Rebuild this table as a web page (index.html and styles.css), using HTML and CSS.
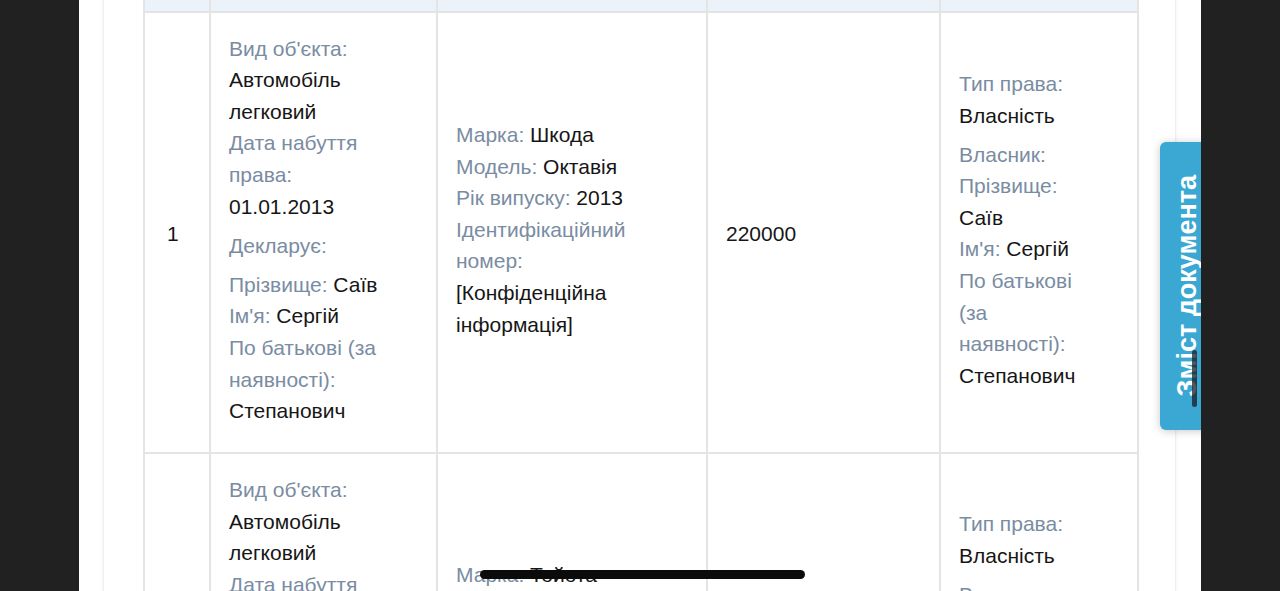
FILE: index.html
```html
<!DOCTYPE html>
<html lang="uk">
<head>
<meta charset="utf-8">
<title>Декларація — транспортні засоби</title>
<link rel="stylesheet" href="styles.css">
</head>
<body>
<div class="screen">
  <div class="card">
    <table class="decl">
      <colgroup>
        <col class="c-num"><col class="c-obj"><col class="c-char"><col class="c-cost"><col class="c-right">
      </colgroup>
      <thead>
        <tr><th>№</th><th>Об'єкт</th><th>Характеристики</th><th>Вартість</th><th>Право</th></tr>
      </thead>
      <tbody>
        <tr>
          <td class="num">1</td>
          <td>
            <div class="box box-obj">
              <div class="grp">
                <div class="it"><span class="lbl">Вид об'єкта:</span> <span class="val">Автомобіль легковий</span></div>
                <div class="it"><span class="lbl">Дата набуття права:</span> <span class="val">01.01.2013</span></div>
              </div>
              <div class="grp"><div class="it"><span class="lbl">Декларує:</span></div></div>
              <div class="grp">
                <div class="it"><span class="lbl">Прізвище:</span> <span class="val">Саїв</span></div>
                <div class="it"><span class="lbl">Ім'я:</span> <span class="val">Сергій</span></div>
                <div class="it"><span class="lbl">По батькові (за наявності):</span> <span class="val">Степанович</span></div>
              </div>
            </div>
          </td>
          <td>
            <div class="box box-char">
              <div class="grp">
                <div class="it"><span class="lbl">Марка:</span> <span class="val">Шкода</span></div>
                <div class="it"><span class="lbl">Модель:</span> <span class="val">Октавія</span></div>
                <div class="it"><span class="lbl">Рік випуску:</span> <span class="val">2013</span></div>
                <div class="it"><span class="lbl">Ідентифікаційний номер:</span> <span class="val">[Конфіденційна інформація]</span></div>
              </div>
            </div>
          </td>
          <td class="cost">220000</td>
          <td>
            <div class="box box-right">
              <div class="grp">
                <div class="it"><span class="lbl">Тип права:</span> <span class="val">Власність</span></div>
              </div>
              <div class="grp">
                <div class="it"><span class="lbl">Власник:</span></div>
                <div class="it"><span class="lbl">Прізвище:</span> <span class="val">Саїв</span></div>
                <div class="it"><span class="lbl">Ім'я:</span> <span class="val">Сергій</span></div>
                <div class="it"><span class="lbl">По батькові (за наявності):</span> <span class="val">Степанович</span></div>
              </div>
            </div>
          </td>
        </tr>
        <tr class="row-compact">
          <td class="num">2</td>
          <td>
            <div class="box box-obj">
              <div class="grp">
                <div class="it"><span class="lbl">Вид об'єкта:</span> <span class="val">Автомобіль легковий</span></div>
                <div class="it"><span class="lbl">Дата набуття права:</span> <span class="val">01.01.2015</span></div>
              </div>
              <div class="grp"><div class="it"><span class="lbl">Декларує:</span></div></div>
              <div class="grp">
                <div class="it"><span class="lbl">Прізвище:</span> <span class="val">Саїв</span></div>
                <div class="it"><span class="lbl">Ім'я:</span> <span class="val">Сергій</span></div>
                <div class="it"><span class="lbl">По батькові (за наявності):</span> <span class="val">Степанович</span></div>
              </div>
            </div>
          </td>
          <td>
            <div class="box box-char">
              <div class="grp">
                <div class="it"><span class="lbl">Марка:</span> <span class="val">Тойота</span></div>
                <div class="it"><span class="lbl">Модель:</span> <span class="val">Камрі</span></div>
                <div class="it"><span class="lbl">Рік випуску:</span> <span class="val">2015</span></div>
                <div class="it"><span class="lbl">Ідентифікаційний номер:</span> <span class="val">[Конфіденційна інформація]</span></div>
              </div>
            </div>
          </td>
          <td class="cost">350000</td>
          <td>
            <div class="box box-right">
              <div class="grp">
                <div class="it"><span class="lbl">Тип права:</span> <span class="val">Власність</span></div>
              </div>
              <div class="grp">
                <div class="it"><span class="lbl">Власник:</span></div>
                <div class="it"><span class="lbl">Прізвище:</span> <span class="val">Саїв</span></div>
                <div class="it"><span class="lbl">Ім'я:</span> <span class="val">Сергій</span></div>
                <div class="it"><span class="lbl">По батькові (за наявності):</span> <span class="val">Степанович</span></div>
              </div>
            </div>
          </td>
        </tr>
      </tbody>
    </table>
  </div>

  <div class="tab"><span class="tab-label">Зміст документа</span></div>
  <div class="scroll-ind"></div>
  <div class="home-ind"></div>
</div>
</body>
</html>
```

FILE: styles.css
```css
html, body {
  margin: 0;
  padding: 0;
  background: #212121;
  overflow: hidden;
}

.screen {
  position: relative;
  width: 1122px;
  height: 591px;
  margin: 0 auto;
  background: #ffffff;
  overflow: hidden;
  font-family: "Liberation Sans", Arial, Helvetica, sans-serif;
  font-size: 21px;
  line-height: 31.6px;
  color: #161616;
}

.card {
  box-sizing: border-box;
  width: 1073px;
  margin: -51px 0 0 24px;
  padding: 0 38px 0 39px;
  border-left: 1px solid #efefef;
  border-right: 1px solid #efefef;
  box-shadow: 0 0 4px rgba(0, 0, 0, 0.06);
  min-height: 700px;
}

.decl {
  width: 994px;
  table-layout: fixed;
  border-collapse: collapse;
}

.c-num { width: 66px; }
.c-obj { width: 227px; }
.c-char { width: 270px; }
.c-cost { width: 233px; }
.c-right { width: 198px; }

.decl th,
.decl td {
  border: 2px solid #e4e4e4;
  padding: 20px 18px 18px;
  text-align: left;
  vertical-align: middle;
}

.decl th {
  padding: 14px 18px;
  vertical-align: top;
  background: #ecf2f9;
  color: #5b6b7d;
  font-weight: bold;
}

.decl td.num {
  padding-left: 22px;
}

.decl .row-compact td {
  padding-bottom: 0;
}

.grp {
  margin-bottom: 7.5px;
}

.row-compact .box-obj .grp:last-child {
  margin-bottom: 5px;
}

.lbl {
  color: #7a8ca2;
}

.val {
  color: #161616;
}

.box-obj { max-width: 165px; }
.box-char { max-width: 200px; }
.box-right { max-width: 130px; }

.tab {
  position: absolute;
  left: 1081px;
  top: 142px;
  width: 60px;
  height: 288px;
  box-sizing: border-box;
  padding-left: 14px;
  display: flex;
  align-items: center;
  background: #3aa8d3;
  border-radius: 6px 0 0 6px;
  box-shadow: 0 1px 8px rgba(0, 0, 0, 0.22);
}

.tab-label {
  writing-mode: vertical-rl;
  transform: rotate(180deg);
  font-family: "Liberation Sans", Arial, sans-serif;
  font-weight: bold;
  font-size: 27px;
  line-height: 27px;
  color: #ffffff;
  white-space: nowrap;
}

.scroll-ind {
  position: absolute;
  left: 1113px;
  top: 350px;
  width: 5px;
  height: 57px;
  border-radius: 3px;
  background: rgba(25, 30, 35, 0.75);
}

.home-ind {
  position: absolute;
  left: 401px;
  top: 570px;
  width: 325px;
  height: 9px;
  border-radius: 5px;
  background: #0b0b0b;
}
```
